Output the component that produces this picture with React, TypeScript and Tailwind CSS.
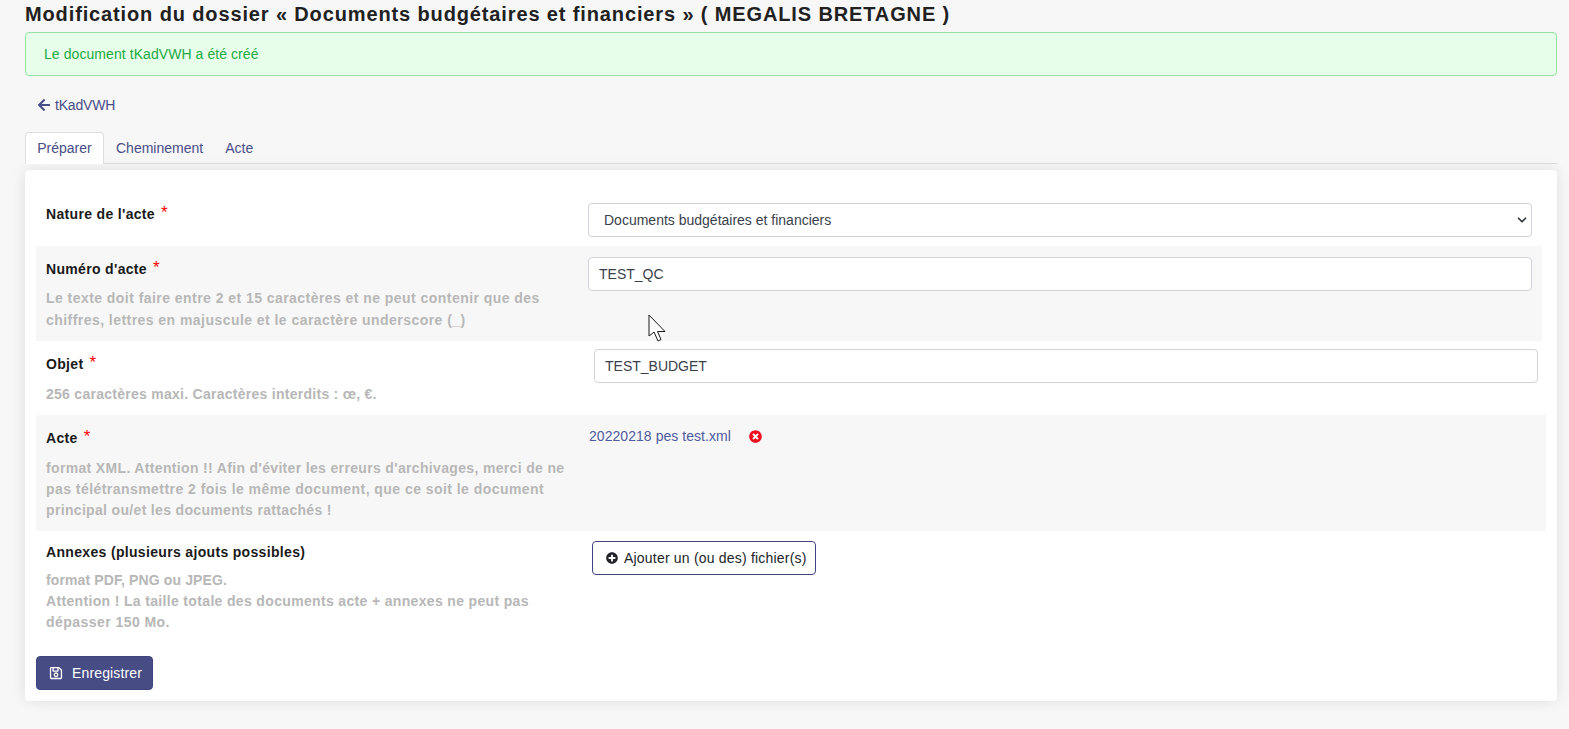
import { ChevronDown } from "lucide-react";
import { FaArrowLeft, FaPlusCircle, FaRegSave, FaTimesCircle } from "react-icons/fa";

function Label({ text, required }: { text: string; required?: boolean }) {
  return (
    <div className="flex text-[14px] leading-[20px] font-bold text-[#1a1a1a] tracking-[0.33px]">
      <span>{text}</span>
      {required && <span className="ml-[6px] -mt-[1px] text-[#ff0000] font-normal text-[17px]">*</span>}
    </div>
  );
}

function Hint({ children, className }: { children: React.ReactNode; className: string }) {
  return <div className={`text-[14px] leading-[21px] font-bold text-[#b7b7b7] whitespace-nowrap ${className}`}>{children}</div>;
}

function TextInput({ value }: { value: string }) {
  return (
    <input
      readOnly
      defaultValue={value}
      className="w-[944px] h-[34px] px-[10px] bg-white border border-[#d0d3da] rounded-[4px] text-[14px] text-[#3a3f4b] outline-none"
    />
  );
}

export default function App() {
  return (
    <div className="relative min-h-[729px] bg-[#f7f7f7] pl-[25px] pr-[12px] pb-[28px] font-['Liberation_Sans',Arial,sans-serif]">
      <h1 className="h-[32px] pt-[1px] text-[20px] leading-[26px] font-bold text-[#212121] tracking-[0.87px]">
        Modification du dossier « Documents budgétaires et financiers » ( MEGALIS BRETAGNE )
      </h1>

      <div className="h-[44px] flex items-center pl-[18px] bg-[#e7ffea] border border-[#95e3a2] rounded-[4px] text-[14px] text-[#22a844] tracking-[0.07px]">
        Le document tKadVWH a été créé
      </div>

      <a className="mt-[21px] ml-[12px] h-[16px] flex items-center gap-[4px] text-[14px] text-[#4a4e88] tracking-[-0.2px]">
        <FaArrowLeft className="w-[14px] h-[14px]" />
        tKadVWH
      </a>

      <div className="mt-[19px] h-[32px] flex border-b border-[#dedede] text-[14px] text-[#4a4e88]">
        <div className="h-[32px] w-[79px] flex items-center justify-center bg-white border border-b-0 border-[#dedede] rounded-t-[4px]">
          Préparer
        </div>
        <div className="ml-[12px] h-[32px] flex items-center">Cheminement</div>
        <div className="ml-[22px] h-[32px] flex items-center">Acte</div>
      </div>

      <div className="mt-[6px] h-[531px] bg-white rounded-[4px] px-[11px] shadow-[0_0_14px_rgba(0,0,0,0.1)]">
        <div className="h-[76px] flex">
          <div className="w-[552px] pl-[10px] pt-[34px]">
            <Label text="Nature de l'acte" required />
          </div>
          <div className="relative w-[944px] h-[34px] mt-[33px]">
            <select className="w-full h-full pl-[15px] bg-white border border-[#d0d3da] rounded-[4px] text-[14px] text-[#3a3f4b] outline-none appearance-none">
              <option>Documents budgétaires et financiers</option>
            </select>
            <ChevronDown className="absolute right-[3px] top-[10px] w-[14px] h-[14px] text-[#343a40]" strokeWidth={3} />
          </div>
        </div>

        <div className="w-[1506px] h-[95px] flex bg-[#f7f7f7]">
          <div className="w-[552px] pl-[10px] pt-[13px]">
            <Label text="Numéro d'acte" required />
            <div className="mt-[9px]">
              <Hint className="tracking-[0.45px]">Le texte doit faire entre 2 et 15 caractères et ne peut contenir que des</Hint>
              <Hint className="mt-[1px] tracking-[0.45px]">chiffres, lettres en majuscule et le caractère underscore (_)</Hint>
            </div>
          </div>
          <div className="pt-[11px]">
            <TextInput value="TEST_QC" />
          </div>
        </div>

        <div className="h-[74px] flex">
          <div className="w-[558px] pl-[10px] pt-[13px]">
            <Label text="Objet" required />
            <Hint className="mt-[10px] tracking-[0.27px]">256 caractères maxi. Caractères interdits : œ, €.</Hint>
          </div>
          <div className="pt-[8px]">
            <TextInput value="TEST_BUDGET" />
          </div>
        </div>

        <div className="w-[1510px] h-[116px] flex bg-[#f7f7f7]">
          <div className="w-[553px] pl-[10px] pt-[13px]">
            <Label text="Acte" required />
            <div className="mt-[10px]">
              <Hint className="tracking-[0.34px]">format XML. Attention !! Afin d'éviter les erreurs d'archivages, merci de ne</Hint>
              <Hint className="tracking-[0.45px]">pas télétransmettre 2 fois le même document, que ce soit le document</Hint>
              <Hint className="tracking-[0.33px]">principal ou/et les documents rattachés !</Hint>
            </div>
          </div>
          <div className="pt-[13px] flex items-start">
            <a className="text-[14px] leading-[16px] text-[#4f5a9e] tracking-[0.05px]">20220218 pes test.xml</a>
            <FaTimesCircle className="ml-[18px] mt-[2px] w-[13px] h-[13px] text-[#f00f1e]" />
          </div>
        </div>

        <div className="h-[125px] flex">
          <div className="w-[556px] pl-[10px] pt-[11px]">
            <Label text="Annexes (plusieurs ajouts possibles)" />
            <div className="mt-[8px]">
              <Hint className="tracking-[0.12px]">format PDF, PNG ou JPEG.</Hint>
              <Hint className="tracking-[0.34px]">Attention ! La taille totale des documents acte + annexes ne peut pas</Hint>
              <Hint className="tracking-[0.45px]">dépasser 150 Mo.</Hint>
            </div>
          </div>
          <div className="pt-[10px]">
            <button className="h-[34px] w-[224px] flex items-center pl-[13px] gap-[6px] bg-white border border-[#3f4380] rounded-[4px] text-[14px] text-[#212529] tracking-[0.2px]">
              <FaPlusCircle className="w-[12px] h-[12px]" />
              Ajouter un (ou des) fichier(s)
            </button>
          </div>
        </div>

        <button className="h-[34px] w-[117px] flex items-center pl-[12px] gap-[9px] bg-[#484c85] border border-[#3f4380] rounded-[4px] text-[14px] text-white tracking-[0.15px]">
          <FaRegSave className="w-[14px] h-[14px]" />
          Enregistrer
        </button>
      </div>

      <svg className="absolute left-[648px] top-[314px]" width="20" height="29" viewBox="0 0 20 29">
        <path d="M1 1 L1 22 L6 18 L10 27 L13 25.5 L9.5 17.5 L17 17.5 Z" fill="#ffffff" stroke="#1a1a1a" strokeWidth="1" strokeLinejoin="miter" />
      </svg>
    </div>
  );
}
